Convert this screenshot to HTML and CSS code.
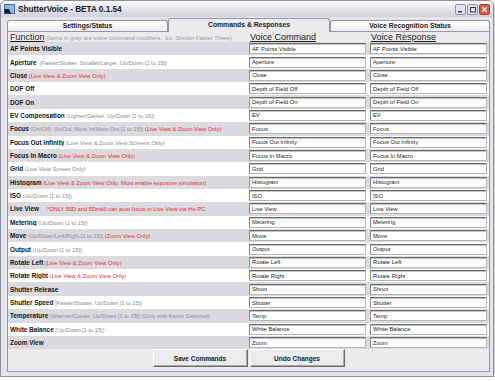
FILE: index.html
```html
<!DOCTYPE html>
<html lang="en">
<head>
    <meta charset="UTF-8">
    <meta name="viewport" content="width=device-width, initial-scale=1.0">
    <title>ShutterVoice - BETA 0.1.54</title>
    <link rel="stylesheet" href="styles.css">
</head>
<body>
    <div class="window">
        <div class="titlebar">
            <svg class="appicon" width="11" height="10" viewBox="0 0 11 10">
                <rect x="0.5" y="0.5" width="10" height="9" fill="#8fb6e8" stroke="#3b6fb8"/>
                <path d="M0.5 9.5 L0.5 5 L5 5 L7 9.5 Z" fill="#1a1a1a"/>
            </svg>
            <span class="title">ShutterVoice - BETA 0.1.54</span>
            <svg class="controls" width="35" height="11" viewBox="0 0 35 11">
                <rect x="0.5" y="0.5" width="10" height="10" rx="1.5" fill="#dfe3ee" stroke="#8a93a8"/>
                <rect x="3" y="7" width="4" height="1.5" fill="#2a3550"/>
                <rect x="12.5" y="0.5" width="10" height="10" rx="1.5" fill="#dfe3ee" stroke="#8a93a8"/>
                <rect x="15.5" y="3.5" width="5" height="4.5" fill="none" stroke="#2a3550"/>
                <rect x="24.5" y="0.5" width="10" height="10" rx="1.5" fill="#e2574a" stroke="#b03a30"/>
                <path d="M27.3 3.3 L31.7 7.7 M31.7 3.3 L27.3 7.7" stroke="#fff" stroke-width="1.3"/>
            </svg>
        </div>

        <div class="client">
            <div class="tabs">
                <div class="tab first">Settings/Status</div>
                <div class="tab active">Commands &amp; Responses</div>
                <div class="tab last">Voice Recognition Status</div>
            </div>

            <div class="panel">
                <div class="row head">
                    <div class="fn"><span class="hd">Function</span> <span class="note">(Items in gray are voice command modifiers.&nbsp; Ex: Shutter Faster Three)</span></div>
                    <div class="hd col">Voice Command</div>
                    <div class="hd col">Voice Response</div>
                </div>

                <div class="list">
                    <div class="row">
                        <div class="fn"><b>AF Points Visible</b></div>
                        <input type="text" value="AF Points Visible">
                        <input type="text" value="AF Points Visible">
                    </div>
                    <div class="row">
                        <div class="fn"><b>Aperture</b>&nbsp; <span class="mod">(Faster/Slower, Smaller/Larger, Up/Down [1 to 15])</span></div>
                        <input type="text" value="Aperture">
                        <input type="text" value="Aperture">
                    </div>
                    <div class="row">
                        <div class="fn"><b>Close</b> <span class="warn">(Live View &amp; Zoom View Only)</span></div>
                        <input type="text" value="Close">
                        <input type="text" value="Close">
                    </div>
                    <div class="row">
                        <div class="fn"><b>DOF Off</b></div>
                        <input type="text" value="Depth of Field Off">
                        <input type="text" value="Depth of Field Off">
                    </div>
                    <div class="row">
                        <div class="fn"><b>DOF On</b></div>
                        <input type="text" value="Depth of Field On">
                        <input type="text" value="Depth of Field On">
                    </div>
                    <div class="row">
                        <div class="fn"><b>EV Compensation</b> <span class="mod">(Lighter/Darker, Up/Down [1 to 15])</span></div>
                        <input type="text" value="EV">
                        <input type="text" value="EV">
                    </div>
                    <div class="row">
                        <div class="fn"><b>Focus</b> <span class="mod">(On/Off)&nbsp; (In/Out, More In/More Out [1 to 15])</span> <span class="warn">(Live View &amp; Zoom View Only)</span></div>
                        <input type="text" value="Focus">
                        <input type="text" value="Focus">
                    </div>
                    <div class="row">
                        <div class="fn"><b>Focus Out Infinity</b> <span class="mod">(Live View &amp; Zoom View Screens Only)</span></div>
                        <input type="text" value="Focus Out Infinity">
                        <input type="text" value="Focus Out Infinity">
                    </div>
                    <div class="row">
                        <div class="fn"><b>Focus In Macro</b> <span class="warn">(Live View &amp; Zoom View Only)</span></div>
                        <input type="text" value="Focus In Macro">
                        <input type="text" value="Focus In Macro">
                    </div>
                    <div class="row">
                        <div class="fn"><b>Grid</b> <span class="mod">(Live View Screen Only)</span></div>
                        <input type="text" value="Grid">
                        <input type="text" value="Grid">
                    </div>
                    <div class="row">
                        <div class="fn"><b>Histogram</b> <span class="warn">(Live View &amp; Zoom View Only: Must enable exposure simulation)</span></div>
                        <input type="text" value="Histogram">
                        <input type="text" value="Histogram">
                    </div>
                    <div class="row">
                        <div class="fn"><b>ISO</b> <span class="mod">(Up/Down [1 to 15])</span></div>
                        <input type="text" value="ISO">
                        <input type="text" value="ISO">
                    </div>
                    <div class="row">
                        <div class="fn"><b>Live View</b>&nbsp;&nbsp;&nbsp;&nbsp; <span class="warn">*ONLY 50D and 5DmkII can auto-focus in Live View via the PC</span></div>
                        <input type="text" value="Live View">
                        <input type="text" value="Live View">
                    </div>
                    <div class="row">
                        <div class="fn"><b>Metering</b> <span class="mod">(Up/Down [1 to 15])</span></div>
                        <input type="text" value="Metering">
                        <input type="text" value="Metering">
                    </div>
                    <div class="row">
                        <div class="fn"><b>Move</b> <span class="mod">(Up/Down/Left/Right [1 to 15])</span> <span class="warn">(Zoom View Only)</span></div>
                        <input type="text" value="Move">
                        <input type="text" value="Move">
                    </div>
                    <div class="row">
                        <div class="fn"><b>Output</b> <span class="mod">(Up/Down [1 to 15])</span></div>
                        <input type="text" value="Output">
                        <input type="text" value="Output">
                    </div>
                    <div class="row">
                        <div class="fn"><b>Rotate Left</b> <span class="warn">(Live View &amp; Zoom View Only)</span></div>
                        <input type="text" value="Rotate Left">
                        <input type="text" value="Rotate Left">
                    </div>
                    <div class="row">
                        <div class="fn"><b>Rotate Right</b> <span class="warn">(Live View &amp; Zoom View Only)</span></div>
                        <input type="text" value="Rotate Right">
                        <input type="text" value="Rotate Right">
                    </div>
                    <div class="row">
                        <div class="fn"><b>Shutter Release</b></div>
                        <input type="text" value="Shoot">
                        <input type="text" value="Shoot">
                    </div>
                    <div class="row">
                        <div class="fn"><b>Shutter Speed</b> <span class="mod">(Faster/Slower, Up/Down [1 to 15])</span></div>
                        <input type="text" value="Shutter">
                        <input type="text" value="Shutter">
                    </div>
                    <div class="row">
                        <div class="fn"><b>Temperature</b> <span class="mod">(Warmer/Cooler, Up/Down [1 to 15]) (Only with Kelvin Selected)</span></div>
                        <input type="text" value="Temp">
                        <input type="text" value="Temp">
                    </div>
                    <div class="row">
                        <div class="fn"><b>White Balance</b> <span class="mod">(Up/Down [1 to 15])</span></div>
                        <input type="text" value="White Balance">
                        <input type="text" value="White Balance">
                    </div>
                    <div class="row">
                        <div class="fn"><b>Zoom View</b></div>
                        <input type="text" value="Zoom">
                        <input type="text" value="Zoom">
                    </div>
                </div>

                <div class="actions">
                    <button>Save Commands</button>
                    <button>Undo Changes</button>
                </div>
            </div>
        </div>
    </div>
</body>
</html>
```

FILE: styles.css
```css
body {
    margin: 0;
    background: #ffffff;
    font-family: "Liberation Sans", Arial, sans-serif;
}

.window {
    box-sizing: border-box;
    width: 494px;
    height: 377px;
    border: 1px solid #8e8e9c;
    border-radius: 6px 6px 0 0;
    background: #e4e4ea;
    display: flex;
    flex-direction: column;
    box-shadow: 1px 1px 2px rgba(0, 0, 0, 0.25);
}

.titlebar {
    height: 16px;
    display: flex;
    align-items: center;
    gap: 3px;
    padding: 0 3px 0 3px;
    border-radius: 5px 5px 0 0;
    background: linear-gradient(#fbfbfd, #e6e6ec 45%, #d2d2dc);
}

.appicon {
    flex: none;
}

.title {
    flex: 1;
    font-size: 8.2px;
    font-weight: bold;
    color: #18182a;
}

.controls {
    flex: none;
}

.client {
    flex: 1;
    display: flex;
    flex-direction: column;
    padding: 1px 3px 4px 6px;
}

.tabs {
    display: flex;
    align-items: flex-end;
    height: 13px;
}

.tab {
    box-sizing: border-box;
    height: 11px;
    border: 1px solid #9696a2;
    border-bottom: none;
    border-radius: 3px 3px 0 0;
    background: linear-gradient(#ffffff, #ececf0);
    font-size: 6.8px;
    font-weight: bold;
    color: #1c1c1c;
    text-align: center;
    line-height: 10px;
}

.tab.first {
    width: 161px;
}

.tab.last {
    width: 160px;
}

.tab.active {
    width: 162px;
    height: 14px;
    margin-bottom: -1px;
    position: relative;
    z-index: 1;
    background: #ebebee;
    line-height: 12px;
}

.panel {
    flex: 1;
    display: flex;
    flex-direction: column;
    border: 1px solid #9696a2;
    background: #ebebee;
}

.row {
    display: grid;
    grid-template-columns: 235px 117px 117px;
    column-gap: 4px;
    align-items: center;
    padding: 0 2px;
    height: 13.36px;
}

.row.head {
    height: 10px;
    align-items: end;
}

.hd {
    font-size: 9px;
    color: #1c1c1c;
    text-decoration: underline;
    line-height: 10px;
}

.col {
    padding-left: 1px;
}

.note {
    font-size: 5.9px;
    color: #9a9a9a;
}

.list .row:nth-child(odd) {
    background: #dadadf;
}

.list .row:nth-child(even) {
    background: #ffffff;
}

.fn {
    white-space: nowrap;
    overflow: hidden;
    font-size: 5.7px;
}

.fn b {
    font-size: 6.4px;
    color: #141414;
}

.mod {
    color: #8c8c8c;
}

.warn {
    color: #e22a36;
}

.row input {
    box-sizing: border-box;
    width: 100%;
    height: 11px;
    margin: 0;
    padding: 0 0 0 2px;
    border: 1px solid #b4b4b4;
    border-top-color: #6a6a6a;
    border-left-color: #8a8a8a;
    box-shadow: inset 0 1px 0 #c4c4c4;
    background: #ffffff;
    font-family: "Liberation Sans", Arial, sans-serif;
    font-size: 5.8px;
    color: #222222;
}

.actions {
    display: flex;
    justify-content: center;
    gap: 2px;
}

button {
    box-sizing: border-box;
    width: 95px;
    height: 18px;
    border: 1px solid;
    border-color: #ffffff #6a6a6a #6a6a6a #ffffff;
    box-shadow: inset -1px -1px 0 #a8a8a8;
    background: #ececee;
    font-family: "Liberation Sans", Arial, sans-serif;
    font-size: 6.5px;
    font-weight: bold;
    color: #1a1a1a;
    padding: 0;
}
```
